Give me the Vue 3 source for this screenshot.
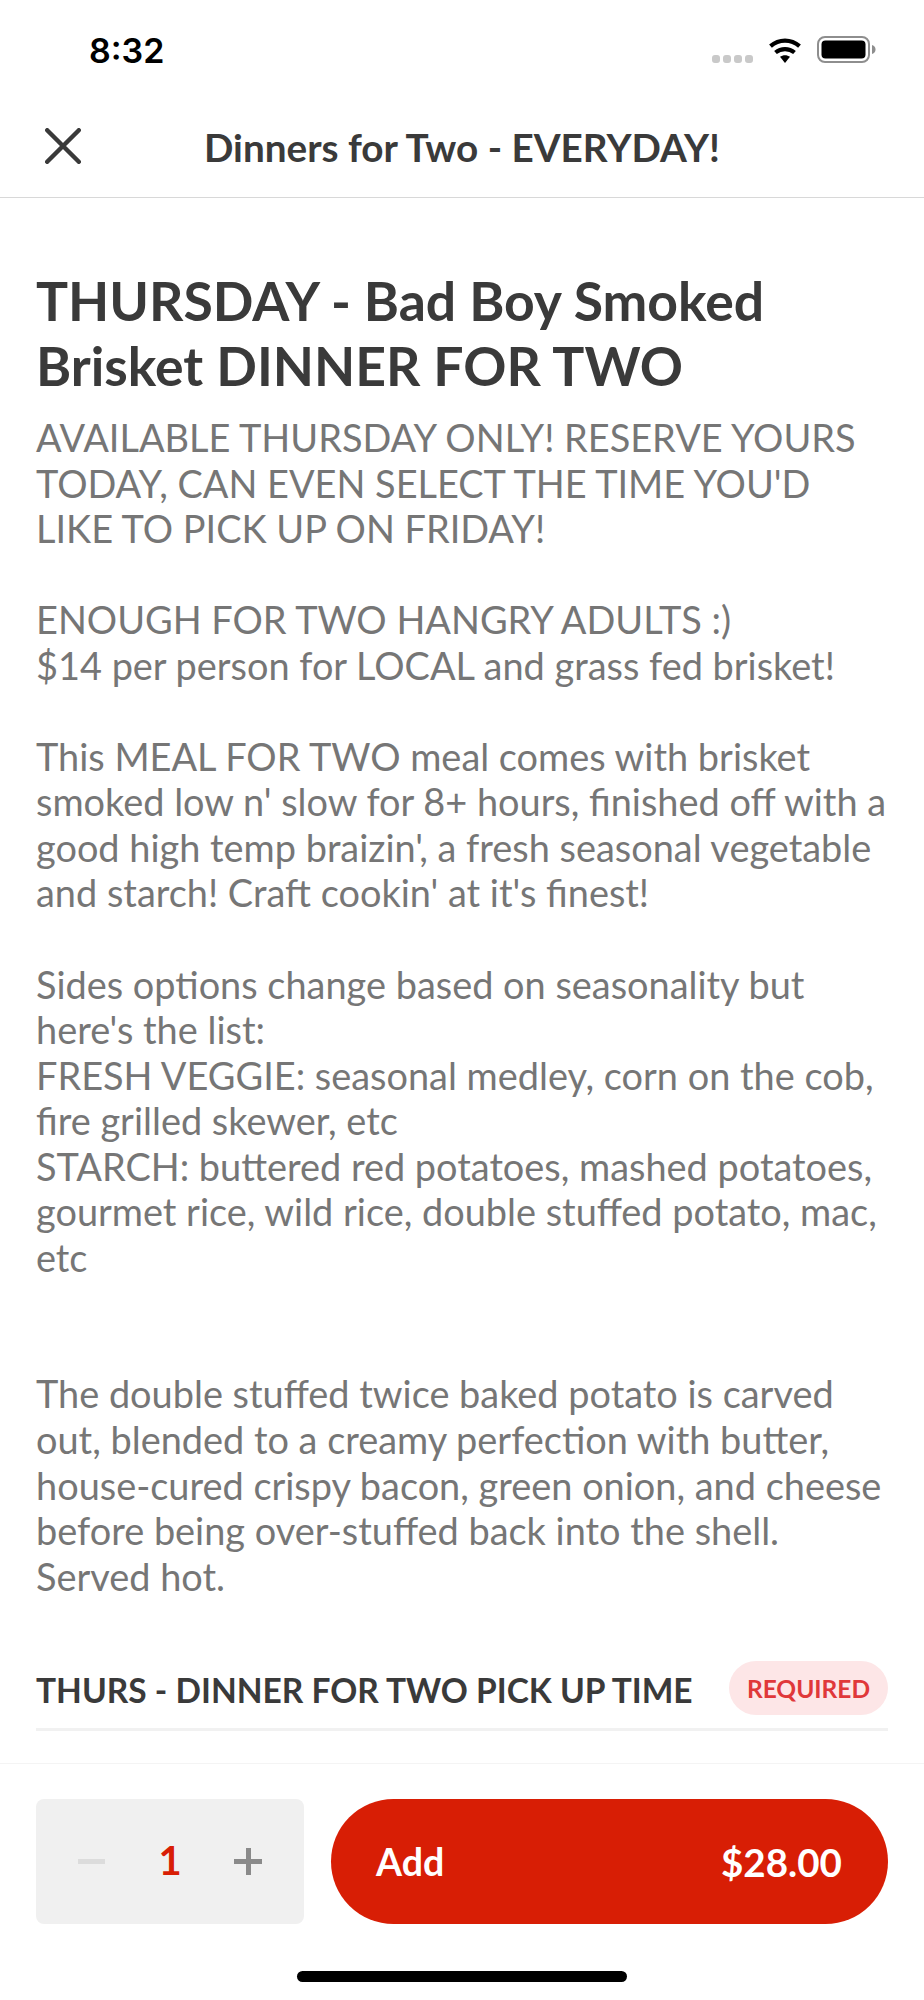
<script setup>
const lines = ["AVAILABLE THURSDAY ONLY! RESERVE YOURS", "TODAY, CAN EVEN SELECT THE TIME YOU'D", "LIKE TO PICK UP ON FRIDAY!", "", "ENOUGH FOR TWO HANGRY ADULTS :)", "$14 per person for LOCAL and grass fed brisket!", "", "This MEAL FOR TWO meal comes with brisket", "smoked low n' slow for 8+ hours, finished off with a", "good high temp braizin', a fresh seasonal vegetable", "and starch! Craft cookin' at it's finest!", "", "Sides options change based on seasonality but", "here's the list:", "FRESH VEGGIE: seasonal medley, corn on the cob,", "fire grilled skewer, etc", "STARCH: buttered red potatoes, mashed potatoes,", "gourmet rice, wild rice, double stuffed potato, mac,", "etc", "", "", "The double stuffed twice baked potato is carved", "out, blended to a creamy perfection with butter,", "house-cured crispy bacon, green onion, and cheese", "before being over-stuffed back into the shell.", "Served hot."]
</script>

<template>
  <div class="screen">
    <div class="status">
      <span class="time">8:32</span>
      <div class="status-icons">
        <div class="dots"><i></i><i></i><i></i><i></i></div>
        <svg class="wifi" width="36" height="26" viewBox="0 0 36 26">
          <path d="M18 26l-5-6.2c2.9-2.2 7.1-2.2 10 0z" fill="#000" />
          <path d="M8.500 15.500c5.500-4.600 13.500-4.600 19 0M3.500 9.200c8.500-7.400 20.500-7.400 29 0" fill="none" stroke="#000" stroke-width="4.200" />
        </svg>
        <svg class="battery" width="59" height="27" viewBox="0 0 59 27">
          <rect x="1" y="1" width="51" height="25" rx="7" fill="none" stroke="#8e8e8e" stroke-width="2" />
          <rect x="4.500" y="4.500" width="44" height="18" rx="4" fill="#000" />
          <path d="M55 9c2.500 .6 3.500 2.500 3.500 4.500s-1 3.900-3.500 4.500z" fill="#8e8e8e" />
        </svg>
      </div>
    </div>

    <div class="nav">
      <svg class="close" width="36" height="36" viewBox="0 0 36 36">
        <path d="M2.200 2.200l31.600 31.600M33.800 2.200l-31.600 31.600" stroke="#3a3a3a" stroke-width="4.400" stroke-linecap="round" />
      </svg>
      <span class="nav-title">Dinners for Two - EVERYDAY!</span>
    </div>

    <div class="content">
      <h1>THURSDAY - Bad Boy Smoked<br>Brisket DINNER FOR TWO</h1>
      <div class="desc">
        <div v-for="(line, i) in lines" :key="i" class="line">{{ line }}</div>
      </div>
      <div class="section">
        <span class="section-title">THURS - DINNER FOR TWO PICK UP TIME</span>
        <span class="pill">REQUIRED</span>
      </div>
    </div>

    <div class="footer">
      <div class="stepper">
        <span class="minus"></span>
        <span class="qty">1</span>
        <span class="plus"></span>
      </div>
      <div class="add">
        <span>Add</span>
        <span class="price">$28.00</span>
      </div>
    </div>
    <div class="home-wrap"><div class="home"></div></div>
  </div>
</template>

<style scoped>
.screen {
  width: 924px;
  height: 2000px;
  display: flex;
  flex-direction: column;
  background: #fff;
  font-family: Lato, "Liberation Sans", sans-serif;
  overflow: hidden;
}

.status {
  height: 100px;
  flex: none;
  display: flex;
  justify-content: space-between;
  align-items: flex-start;
  padding: 29px 48px 0 89px;
  box-sizing: border-box;
}

.time {
  font-family: Inter, "Liberation Sans", sans-serif;
  font-size: 34px;
  line-height: 44px;
  font-weight: 600;
  color: #000;
}

.status-icons {
  display: flex;
  align-items: flex-end;
  margin-top: 7px;
  height: 27px;
}

.dots {
  display: flex;
  gap: 3px;
  margin-right: 14px;
}

.dots i {
  width: 8px;
  height: 8px;
  border-radius: 3px;
  background: #c9c9c9;
}

.wifi {
  margin-right: 14px;
}

.nav {
  height: 97px;
  flex: none;
  display: flex;
  align-items: center;
  justify-content: center;
  position: relative;
  border-bottom: 1px solid #d8d8d8;
}

.close {
  position: absolute;
  left: 45px;
  top: 28px;
}

.nav-title {
  font-size: 38.700px;
  font-weight: 700;
  color: #3a3a3a;
  margin-top: -4px;
}

.content {
  flex: 1;
  min-height: 0;
  padding: 0 36px;
  overflow: hidden;
}

h1 {
  margin: 70px 0 0;
  font-size: 53.500px;
  line-height: 65px;
  font-weight: 700;
  color: #3a3a3a;
}

.desc {
  margin-top: 17px;
  font-size: 37.900px;
  line-height: 45.550px;
  color: #767676;
}

.line {
  min-height: 45.550px;
  white-space: nowrap;
}

.section {
  margin-top: 62px;
  padding-bottom: 13px;
  display: flex;
  justify-content: space-between;
  align-items: center;
  border-bottom: 3px solid #f1f1f1;
}

.section-title {
  font-size: 33.500px;
  font-weight: 700;
  color: #3a3a3a;
  white-space: nowrap;
  padding-top: 4px;
}

.pill {
  width: 159px;
  height: 54px;
  border-radius: 27px;
  background: #fde6e7;
  color: #e0383a;
  font-size: 24.500px;
  font-weight: 700;
  display: flex;
  align-items: center;
  justify-content: center;
}

.footer {
  flex: none;
  height: 161px;
  box-sizing: border-box;
  border-top: 1px solid #f4f4f4;
  padding: 35px 36px 0;
  display: flex;
  gap: 27px;
  align-items: flex-start;
}

.stepper {
  width: 268px;
  height: 125px;
  flex: none;
  background: #f0f0f0;
  border-radius: 8px;
  position: relative;
  display: flex;
  align-items: center;
  justify-content: center;
}

.qty {
  font-size: 40px;
  line-height: 40px;
  font-weight: 700;
  color: #d81e05;
  margin-top: -3px;
}

.minus,
.plus {
  position: absolute;
  top: 60px;
  width: 28px;
  height: 5px;
}

.minus {
  left: 42px;
  width: 27px;
  background: #dcdcdc;
}

.plus {
  left: 198px;
  background: #8a8a8a;
}

.plus::after {
  content: "";
  position: absolute;
  left: 11.500px;
  top: -11px;
  width: 5px;
  height: 27px;
  background: #8a8a8a;
}

.add {
  flex: 1;
  height: 125px;
  border-radius: 62.500px;
  background: #d81e05;
  color: #fff;
  font-size: 37.500px;
  font-weight: 700;
  display: flex;
  align-items: center;
  justify-content: space-between;
  padding: 0 46px 0 45px;
}

.price {
  font-size: 38.600px;
}

.home-wrap {
  flex: none;
  height: 76px;
  display: flex;
  justify-content: center;
}

.home {
  width: 330px;
  height: 11px;
  margin-top: 47px;
  border-radius: 6px;
  background: #000;
}
</style>
